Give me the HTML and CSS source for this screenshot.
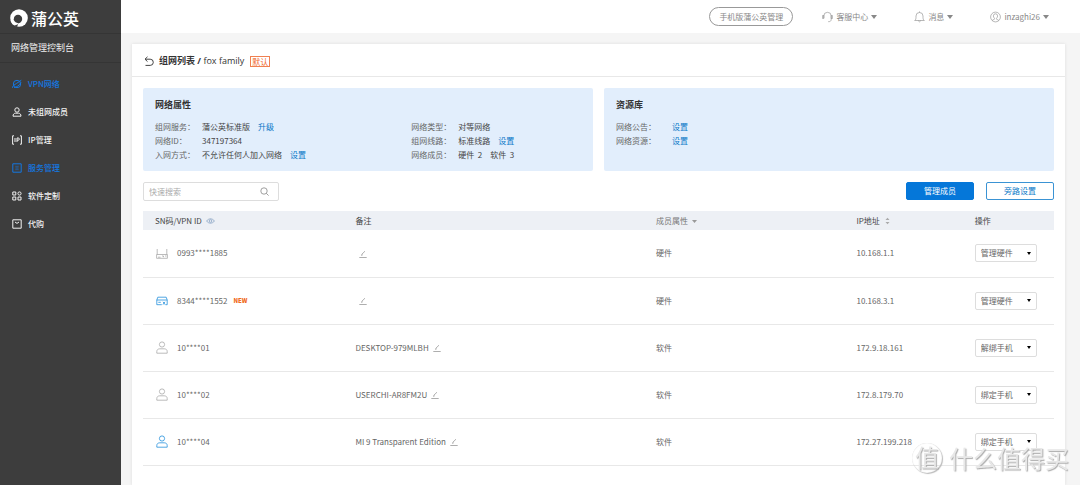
FILE: index.html
```html
<!DOCTYPE html>
<html lang="zh-CN">
<head>
<meta charset="utf-8">
<title>蒲公英 网络管理控制台</title>
<link rel="stylesheet" href="styles.css">
</head>
<body>
<svg class="defs" aria-hidden="true">
  <symbol id="user" viewBox="0 0 12 13"><circle cx="6" cy="3.500" r="2.600"/><path d="M.8 12.200v-1.600c0-1.800 1.200-2.800 3-2.800h4.400c1.800 0 3 1 3 2.800v1.600z"/></symbol>
  <symbol id="edit" viewBox="0 0 8 8"><path d="M.3 7.500h7.400M2.600 5.400l.3-1.200L6 1.200M2.600 5.400l1-.5"/></symbol>
</svg>
<div class="app">
  <aside class="sidebar">
    <div class="brand">
      <svg class="logo" viewBox="0 0 18 18"><circle cx="9" cy="9" r="8.800" fill="#fff"/><circle cx="8" cy="10" r="4.200" fill="#3d3d3d"/><path fill="#3d3d3d" d="M3.500 10.500l5.500 2-2 5.500-4-1z"/><path fill="#fff" d="M.5 11.500l3.300-.6c1 1.800 2.200 2.800 4.600 3.300L7.500 15.500 4.600 16.600C2.500 15.500 1 13.600.5 11.500z"/></svg>
      <span class="brand-name">蒲公英</span>
    </div>
    <div class="console">网络管理控制台</div>
    <nav class="nav">
      <a class="nav-link active" href="#"><svg viewBox="0 0 10 10"><circle cx="5" cy="5" r="3.700"/><path d="M.5 8.800C0 6.500 5 4.500 9.300 1.200M2 8.500C5 8.200 7 6.500 9 3.500"/></svg>VPN网络</a>
      <a class="nav-link" href="#"><svg viewBox="0 0 10 10"><circle cx="5" cy="3" r="2.200"/><path d="M1 9.200c0-2 1.200-3 2.500-3h3c1.300 0 2.500 1 2.500 3z"/></svg>未组网成员</a>
      <a class="nav-link" href="#"><svg viewBox="0 0 10 10"><path d="M2 .8H.6v8.400H2M8 .8h1.400v8.400H8M3 3v4M5 7V3h1.300q1 0 1 1.100t-1 1.100H5"/></svg>IP管理</a>
      <a class="nav-link active" href="#"><svg viewBox="0 0 10 10"><path d="M.8.8h8.400v8.400H.8z"/><path class="thin" d="M3 3.300h4M3 5h4M3 6.700h4M5 3v4"/></svg>服务管理</a>
      <a class="nav-link" href="#"><svg viewBox="0 0 10 10"><path d="M.8 1h3v3h-3zM.8 6h3v3h-3zM6 6h3v3H6z"/><circle cx="7.500" cy="2.500" r="1.600"/></svg>软件定制</a>
      <a class="nav-link" href="#"><svg viewBox="0 0 10 10"><path d="M.8.8h8.400v8.400H.8zM3 3q2 2.800 4 0"/></svg>代购</a>
    </nav>
  </aside>
  <div class="page">
    <header class="topbar">
      <button class="pill" type="button">手机版蒲公英管理</button>
      <nav class="menus">
        <a class="menu" href="#"><svg viewBox="0 0 11 12"><path d="M1.800 7V5a3.700 3.700 0 0 1 7.400 0v3.500c0 1.500-1 2.200-3 2.200M1.800 4.500H.6v3h1.200zM9.200 4.500h1.200v3H9.200z"/></svg>客服中心<i class="caret"></i></a>
        <a class="menu" href="#"><svg viewBox="0 0 11 12"><path d="M.7 9.500h9.600C9 8.500 9 7.500 9 5a3.500 3.500 0 0 0-7 0c0 2.500 0 3.500-1.300 4.500zM5.500 1.500V.4M4.200 9.700q1.300 2.300 2.600 0"/></svg>消息<i class="caret"></i></a>
        <a class="menu" href="#"><svg viewBox="0 0 11 12"><circle cx="5.500" cy="6" r="4.900"/><path d="M2.200 9.500c.5-.9 2.400-.8 2.400-1.600S3.400 6.500 3.400 4.900a2.100 2.100 0 0 1 4.200 0c0 1.600-1.200 2.200-1.200 3s1.900.7 2.400 1.600"/></svg>inzaghi26<i class="caret"></i></a>
      </nav>
    </header>
    <main class="card">
      <div class="card-head">
        <a class="back" href="#" aria-label="返回"><svg viewBox="0 0 10 11"><path d="M3.500.8L1 3.200l2.500 2.400M1 3.200h5.200a3 3 0 0 1 0 6.200H1.500"/></svg></a>
        <h1 class="title">组网列表 / <span class="family">fox family</span></h1>
        <span class="tag">默认</span>
      </div>
      <div class="content">
        <div class="panels">
          <section class="panel">
            <h2 class="panel-title">网络属性</h2>
            <div class="columns">
              <dl class="facts">
                <dt>组网服务：</dt><dd>蒲公英标准版<a href="#">升级</a></dd>
                <dt>网络ID：</dt><dd>347197364</dd>
                <dt>入网方式：</dt><dd>不允许任何人加入网络<a href="#">设置</a></dd>
              </dl>
              <dl class="facts">
                <dt>网络类型：</dt><dd>对等网络</dd>
                <dt>组网线路：</dt><dd>标准线路<a href="#">设置</a></dd>
                <dt>网络成员：</dt><dd><span>硬件&nbsp; 2</span><span>软件&nbsp; 3</span></dd>
              </dl>
            </div>
          </section>
          <section class="panel">
            <h2 class="panel-title">资源库</h2>
            <dl class="facts facts-wide">
              <dt>网络公告：</dt><dd><a href="#">设置</a></dd>
              <dt>网络资源：</dt><dd><a href="#">设置</a></dd>
            </dl>
          </section>
        </div>
        <div class="toolbar">
          <label class="search">
            <input type="search" placeholder="快速搜索" aria-label="快速搜索">
            <svg viewBox="0 0 9 9"><circle cx="4" cy="4" r="3.200"/><path d="M6.300 6.300l2.300 2.300"/></svg>
          </label>
          <div class="actions">
            <button class="btn primary" type="button">管理成员</button>
            <button class="btn" type="button">旁路设置</button>
          </div>
        </div>
        <table class="members">
          <thead>
            <tr>
              <th class="c-id">SN码/VPN ID <svg class="eye" viewBox="0 0 9 6"><path d="M.5 3q4-4.500 8 0-4 4.500-8 0z"/><circle cx="4.500" cy="3" r="1.300"/></svg></th>
              <th class="c-note">备注</th>
              <th class="c-type light">成员属性 <svg class="drop" viewBox="0 0 5 3"><path d="M0 0h5L2.500 3z"/></svg></th>
              <th class="c-ip">IP地址 <svg class="sort" viewBox="0 0 5 8"><path d="M.5 3l2-2.300 2 2.300zM.5 5l2 2.300 2-2.300z"/></svg></th>
              <th class="c-op">操作</th>
            </tr>
          </thead>
          <tbody>
            <tr>
              <td><div class="member"><svg viewBox="0 0 12 12"><path d="M1.200 7V1.500M10.800 7V1.500M.6 7h10.800v3.800H.6zM2 9.700h2.500M6 8.500h1.500v1.200M9 8.500h1.500"/></svg>0993****1885</div></td>
              <td><button class="edit lone" type="button" aria-label="编辑备注"><svg><use href="#edit"/></svg></button></td>
              <td>硬件</td><td>10.168.1.1</td>
              <td><span class="pick"><select aria-label="操作"><option>管理硬件</option></select></span></td>
            </tr>
            <tr>
              <td><div class="member on"><svg viewBox="0 0 12 12"><path d="M.8 5.500l1-2.800h8.400l1 2.800v4.700H9.500M.8 5.500h10.400M.8 5.500v4.700h5M2.300 7.800h2.500M7 7.300l2 2.800M9 7.300l-2 2.800"/></svg>8344****1552<span class="new">NEW</span></div></td>
              <td><button class="edit lone" type="button" aria-label="编辑备注"><svg><use href="#edit"/></svg></button></td>
              <td>硬件</td><td>10.168.3.1</td>
              <td><span class="pick"><select aria-label="操作"><option>管理硬件</option></select></span></td>
            </tr>
            <tr>
              <td><div class="member"><svg><use href="#user"/></svg>10****01</div></td>
              <td>DESKTOP-979MLBH<button class="edit" type="button" aria-label="编辑备注"><svg><use href="#edit"/></svg></button></td>
              <td>软件</td><td>172.9.18.161</td>
              <td><span class="pick"><select aria-label="操作"><option>解绑手机</option></select></span></td>
            </tr>
            <tr>
              <td><div class="member"><svg><use href="#user"/></svg>10****02</div></td>
              <td>USERCHI-AR8FM2U<button class="edit" type="button" aria-label="编辑备注"><svg><use href="#edit"/></svg></button></td>
              <td>软件</td><td>172.8.179.70</td>
              <td><span class="pick"><select aria-label="操作"><option>绑定手机</option></select></span></td>
            </tr>
            <tr>
              <td><div class="member on"><svg><use href="#user"/></svg>10****04</div></td>
              <td>MI 9 Transparent Edition<button class="edit" type="button" aria-label="编辑备注"><svg><use href="#edit"/></svg></button></td>
              <td>软件</td><td>172.27.199.218</td>
              <td><span class="pick"><select aria-label="操作"><option>绑定手机</option></select></span></td>
            </tr>
          </tbody>
        </table>
      </div>
    </main>
  </div>
</div>
<div class="watermark"><span class="seal">值</span>什么值得买</div>
</body>
</html>
```
FILE: styles.css
```css
* { box-sizing: border-box; }
body {
  margin: 0;
  font: 8px/14px "Noto Sans CJK SC", sans-serif;
  color: #555;
  background: #f5f5f5;
}
a { color: inherit; text-decoration: none; }
h1, h2, dl, dd { margin: 0; }
button, input, select { font: inherit; color: inherit; }
svg { fill: none; stroke: currentColor; stroke-width: 0.8; flex: none; }
.defs { position: absolute; width: 0; height: 0; }

.app { display: flex; min-height: 100vh; }

.sidebar { width: 121px; flex: none; background: #3d3d3d; color: #eee; }
.brand {
  display: flex;
  align-items: center;
  gap: 3px;
  height: 34px;
  padding: 2px 10px 0;
  border-bottom: 1px solid #353535;
}
.logo { width: 18px; height: 18px; stroke: none; }
.brand-name { font-size: 16px; font-weight: 500; color: #fff; }
.console {
  height: 29px;
  padding-left: 11px;
  border-bottom: 1px solid #353535;
  font-size: 9px;
  line-height: 28px;
}
.nav { padding-top: 7px; }
.nav-link {
  display: flex;
  align-items: center;
  gap: 6px;
  height: 28px;
  padding-left: 12px;
  font-weight: 500;
  color: #f2f2f2;
}
.nav-link svg { width: 10px; height: 10px; stroke-width: 1; }
.nav-link .thin { stroke-width: 0.4; }
.nav-link.active { color: #1477e0; }

.page { flex: 1; min-width: 0; display: flex; flex-direction: column; }
.topbar {
  display: flex;
  align-items: center;
  justify-content: flex-end;
  gap: 29px;
  height: 33px;
  padding-right: 31px;
  background: #fff;
  color: #888;
}
.pill {
  height: 19px;
  padding: 0 9px;
  border: 1px solid #999;
  border-radius: 10px;
  background: #fff;
}
.menus { display: flex; gap: 37px; }
.menu { display: flex; align-items: center; gap: 3px; }
.menu svg { width: 11px; height: 12px; stroke-width: 0.6; }
.caret {
  border: 3px solid transparent;
  border-top: 4px solid #888;
  border-bottom: 0;
}

.card {
  flex: 1;
  margin: 11px 15px 0 11px;
  background: #fff;
  box-shadow: 0 0 3px #ddd;
}
.card-head {
  display: flex;
  align-items: center;
  height: 33px;
  padding: 2px 12px 0;
  border-bottom: 1px solid #e8e8e8;
}
.back svg { display: block; width: 10px; height: 11px; stroke: #444; stroke-width: 1; }
.title {
  margin-left: 5px;
  font: 700 9px/14px "Open Sans", "Noto Sans CJK SC", sans-serif;
  color: #333;
}
.family { font-weight: 400; }
.tag {
  margin-left: 6px;
  padding: 0 1px;
  border: 1px solid #f08050;
  line-height: 9px;
  color: #f06a30;
}
.content { padding: 11px; }

.panels { display: grid; grid-template-columns: 1fr 1fr; gap: 11px; }
.panel { padding: 10px 11px 9px 12px; border-radius: 2px; background: #e2eefc; }
.panel-title { margin-bottom: 8px; font-size: 9px; line-height: 14px; font-weight: 700; color: #333; }
.columns { display: grid; grid-template-columns: 3fr 2fr; }
.facts { display: grid; grid-template-columns: 47px 1fr; }
.facts-wide { grid-template-columns: 56px 1fr; }
.facts dt { color: #666; }
.facts dd { display: flex; gap: 8px; color: #444; white-space: nowrap; }
.facts a { color: #0a78c8; }

.toolbar {
  display: flex;
  justify-content: space-between;
  margin: 11px 0 10px;
}
.search {
  display: flex;
  align-items: center;
  width: 136px;
  height: 19px;
  padding: 0 9px 0 5px;
  border: 1px solid #ddd;
  border-radius: 2px;
  color: #888;
}
.search input {
  flex: 1;
  min-width: 0;
  padding: 0;
  border: 0;
  outline: 0;
  background: none;
}
.search input::placeholder { color: #aaa; }
.search svg { width: 9px; height: 9px; }
.actions { display: flex; gap: 12px; }
.btn {
  width: 68px;
  height: 18px;
  padding: 0;
  border: 1px solid #3a93d4;
  border-radius: 2px;
  background: #fff;
  color: #0a78c8;
}
.btn.primary { border-color: #0577d9; background: #0577d9; color: #fff; }

.members { width: 100%; table-layout: fixed; border-collapse: collapse; }
.members th {
  height: 19px;
  padding: 0 0 0 12px;
  background: #edf0f5;
  text-align: left;
  font-weight: 400;
  color: #444;
}
.members th.light { color: #777; }
.members td {
  height: 47px;
  padding: 0 0 0 12px;
  border-bottom: 1px solid #e8e8e8;
  color: #666;
}
.c-id, .c-type { width: 22%; }
.c-note { width: 33%; }
.c-ip { width: 13%; }
.c-op { width: 10%; }
.eye { width: 9px; height: 6px; margin-left: 2px; stroke: #8aa5c4; }
.drop { width: 5px; height: 3px; margin: 0 0 1px 2px; fill: #999; stroke: none; }
.sort { width: 5px; height: 8px; margin-left: 3px; vertical-align: middle; fill: #aaa; stroke: none; }
.member { display: flex; align-items: center; padding-left: 1px; }
.member svg { width: 12px; height: 13px; margin-right: 9px; color: #aaa; }
.member.on svg { color: #2490dc; }
.new { margin-left: 6px; font-size: 6px; font-weight: 900; color: #f06a20; }
.edit {
  margin-left: 4px;
  padding: 0;
  border: 0;
  background: none;
  vertical-align: middle;
  color: #999;
}
.edit svg { display: block; width: 8px; height: 8px; }
.pick { display: grid; width: 62px; align-items: center; }
.pick select {
  grid-area: 1 / 1;
  width: 100%;
  height: 18px;
  padding: 0 5px;
  appearance: none;
  border: 1px solid #ddd;
  border-radius: 2px;
  background: #fff;
}
.pick::after {
  content: "";
  grid-area: 1 / 1;
  justify-self: end;
  margin-right: 6px;
  border: 2px solid transparent;
  border-top: 3px solid #000;
  border-bottom: 0;
  pointer-events: none;
}

.watermark {
  position: fixed;
  right: 11px;
  bottom: 11px;
  display: flex;
  align-items: center;
  gap: 7px;
  font-size: 24px;
  line-height: 32px;
  color: #e8e8e8;
  text-shadow: 1px 1px 1px #aaa;
  pointer-events: none;
}
.seal {
  width: 30px;
  height: 30px;
  border-radius: 50%;
  box-shadow: 1px 1px 1px #bbb, inset 0 0 1px #ccc;
  text-align: center;
  line-height: 28px;
}
```
